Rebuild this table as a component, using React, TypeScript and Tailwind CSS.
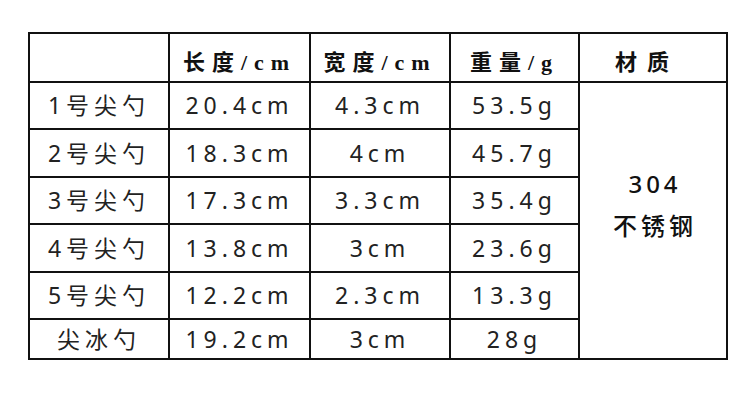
import React from "react";

const rows = [
  ["1号尖勺", "20.4cm", "4.3cm", "53.5g"],
  ["2号尖勺", "18.3cm", "4cm", "45.7g"],
  ["3号尖勺", "17.3cm", "3.3cm", "35.4g"],
  ["4号尖勺", "13.8cm", "3cm", "23.6g"],
  ["5号尖勺", "12.2cm", "2.3cm", "13.3g"],
  ["尖冰勺", "19.2cm", "3cm", "28g"],
];

const heights = ["h-[47px]", "h-[48px]", "h-[47px]", "h-[48px]", "h-[47px]", "h-[40px]"];

export default function App() {
  const head = "border-2 border-[#111] text-center align-middle pt-[10px] text-[22px] font-semibold tracking-[7px] text-[#111]";
  const cell = "border-2 border-[#111] text-center align-middle text-[23px] font-normal tracking-[5px] text-[#222] leading-none";
  const serif = { fontFamily: '"Liberation Serif", "Noto Sans CJK SC", serif' };
  return (
    <div className="w-[750px] h-[416px] bg-white pt-[32px] pl-[28px]" style={{ fontFamily: '"Noto Sans", "Noto Sans CJK SC", sans-serif' }}>
      <table className="border-collapse table-fixed w-[698px]">
        <colgroup>
          <col className="w-[140px]" />
          <col className="w-[141px]" />
          <col className="w-[140px]" />
          <col className="w-[129px]" />
          <col className="w-[148px]" />
        </colgroup>
        <thead>
          <tr className="h-[49px]">
            <th className={head}></th>
            <th className={head} style={serif}>长度/cm</th>
            <th className={head} style={serif}>宽度/cm</th>
            <th className={head} style={serif}>重量/g</th>
            <th className={head + " tracking-[10px] pr-[12px]"} style={serif}>材质</th>
          </tr>
        </thead>
        <tbody>
          {rows.map((r, i) => (
            <tr key={i} className={heights[i]}>
              <td className={cell}>{r[0]}</td>
              <td className={cell}>{r[1]}</td>
              <td className={cell}>{r[2]}</td>
              <td className={cell}>{r[3]}</td>
              {i === 0 && (
                <td rowSpan={6} className="border-2 border-[#111] text-center align-middle text-[#111]">
                  <div className="flex flex-col items-center gap-[18px] pb-[32px] pl-[4px] text-[24px] font-medium tracking-[4px] leading-none">
                    <span>304</span>
                    <span>不锈钢</span>
                  </div>
                </td>
              )}
            </tr>
          ))}
        </tbody>
      </table>
    </div>
  );
}
